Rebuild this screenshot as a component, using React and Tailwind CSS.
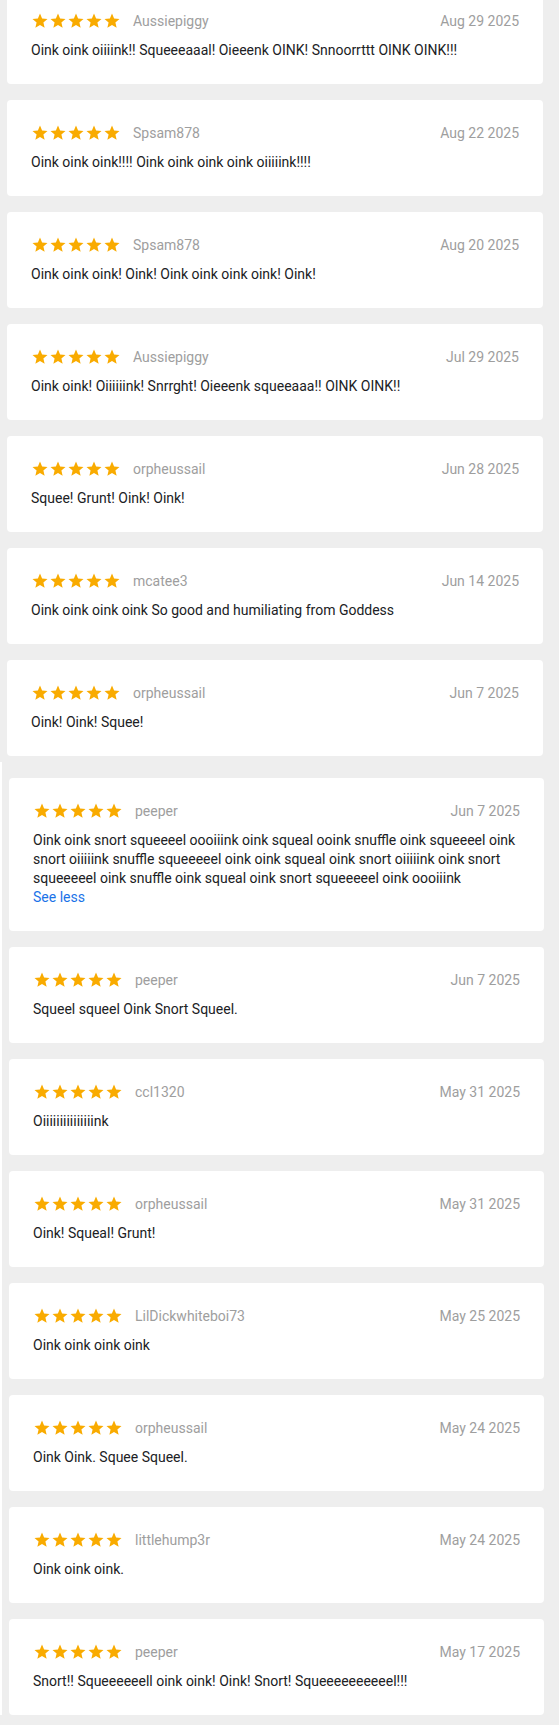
import React from 'react';

const firstBatch = [
  { name: 'Aussiepiggy', date: 'Aug 29 2025', text: 'Oink oink oiiiink!! Squeeeaaal! Oieeenk OINK! Snnoorrttt OINK OINK!!!' },
  { name: 'Spsam878', date: 'Aug 22 2025', text: 'Oink oink oink!!!! Oink oink oink oink oiiiiink!!!!' },
  { name: 'Spsam878', date: 'Aug 20 2025', text: 'Oink oink oink! Oink! Oink oink oink oink! Oink!' },
  { name: 'Aussiepiggy', date: 'Jul 29 2025', text: 'Oink oink! Oiiiiiink! Snrrght! Oieeenk squeeaaa!! OINK OINK!!' },
  { name: 'orpheussail', date: 'Jun 28 2025', text: 'Squee! Grunt! Oink! Oink!' },
  { name: 'mcatee3', date: 'Jun 14 2025', text: 'Oink oink oink oink So good and humiliating from Goddess' },
  { name: 'orpheussail', date: 'Jun 7 2025', text: 'Oink! Oink! Squee!' },
];

const secondBatch = [
  {
    name: 'peeper',
    date: 'Jun 7 2025',
    text: 'Oink oink snort squeeeel oooiiink oink squeal ooink snuffle oink squeeeel oink snort oiiiiink snuffle squeeeeel oink oink squeal oink snort oiiiiink oink snort squeeeeel oink snuffle oink squeal oink snort squeeeeel oink oooiiink',
    expanded: true,
  },
  { name: 'peeper', date: 'Jun 7 2025', text: 'Squeel squeel Oink Snort Squeel.' },
  { name: 'ccl1320', date: 'May 31 2025', text: 'Oiiiiiiiiiiiiiiink' },
  { name: 'orpheussail', date: 'May 31 2025', text: 'Oink! Squeal! Grunt!' },
  { name: 'LilDickwhiteboi73', date: 'May 25 2025', text: 'Oink oink oink oink' },
  { name: 'orpheussail', date: 'May 24 2025', text: 'Oink Oink. Squee Squeel.' },
  { name: 'littlehump3r', date: 'May 24 2025', text: 'Oink oink oink.' },
  { name: 'peeper', date: 'May 17 2025', text: 'Snort!! Squeeeeeell oink oink! Oink! Snort! Squeeeeeeeeeel!!!' },
];

function Star() {
  return (
    <svg width="18" height="18" viewBox="0 0 24 24" className="fill-[#f9ab00] shrink-0">
      <path d="M12 17.27L18.18 21l-1.64-7.03L22 9.24l-7.19-.61L12 2 9.19 8.63 2 9.24l5.46 4.73L5.82 21z" />
    </svg>
  );
}

function ReviewCard({ review }) {
  return (
    <div className="bg-white rounded px-6 pt-6 pb-6">
      <div className="flex items-center h-[18px]">
        <div className="flex">
          {[0, 1, 2, 3, 4].map((i) => (
            <Star key={i} />
          ))}
        </div>
        <span className="ml-3 text-sm text-[#9e9e9e]">{review.name}</span>
        <span className="ml-auto text-sm text-[#9e9e9e]">{review.date}</span>
      </div>
      <p className="mt-[11px] text-[14px] leading-[19px] text-[#202124]">{review.text}</p>
      {review.expanded && (
        <button className="block text-[14px] leading-[19px] text-[#1a73e8]">See less</button>
      )}
    </div>
  );
}

export default function App() {
  return (
    <div className="min-h-screen bg-[#eeeeee] font-['Roboto',sans-serif] overflow-hidden pb-[11px]">
      <div className="flex flex-col gap-4 mt-[-12px] pl-[7px] pr-[16px]">
        {firstBatch.map((r, i) => (
          <ReviewCard key={i} review={r} />
        ))}
      </div>
      <div className="mt-[6px] border-l-2 border-white pl-[7px] pr-[15px] pt-4 flex flex-col gap-4">
        {secondBatch.map((r, i) => (
          <ReviewCard key={i} review={r} />
        ))}
      </div>
    </div>
  );
}
